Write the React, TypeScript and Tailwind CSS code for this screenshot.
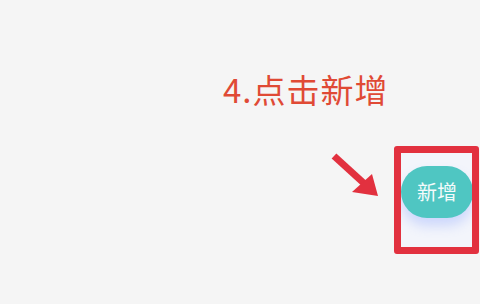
import React from "react";

const cjk = { fontFamily: '"Noto Sans CJK SC", "Noto Sans", sans-serif' };

const Arrow = () => (
  <svg width="52" height="48" viewBox="0 0 52 48" className="block">
    <line x1="4" y1="4" x2="38" y2="35" stroke="#e2313f" strokeWidth="7" strokeLinecap="butt" />
    <polygon points="48,44 22,40 42,22" fill="#e2313f" />
  </svg>
);

const App = () => {
  return (
    <div className="w-[480px] h-[304px] overflow-hidden bg-[#f5f5f5] flex flex-col" style={cjk}>
      <div className="pt-[69px] pl-[223px]">
        <h1 className="text-[33px] leading-[40px] text-[#e04a35] font-normal tracking-[1px]">4.点击新增</h1>
      </div>
      <div className="flex items-start mt-[37px] pl-[330px]">
        <div className="mt-[6px]">
          <Arrow />
        </div>
        <div className="ml-[12px] w-[85px] h-[108px] border-[7px] border-[#e2313f] rounded-[3px] overflow-hidden bg-[#f3f5fb] pt-[13px]">
          <div className="w-[72px] h-[52px] rounded-[26px] bg-[#4fc6c2] flex items-center justify-center shadow-[0_8px_12px_rgba(120,150,255,0.3)]">
            <span className="text-[#f4fbfb] text-[20px] leading-none">新增</span>
          </div>
        </div>
      </div>
    </div>
  );
};

export default App;
